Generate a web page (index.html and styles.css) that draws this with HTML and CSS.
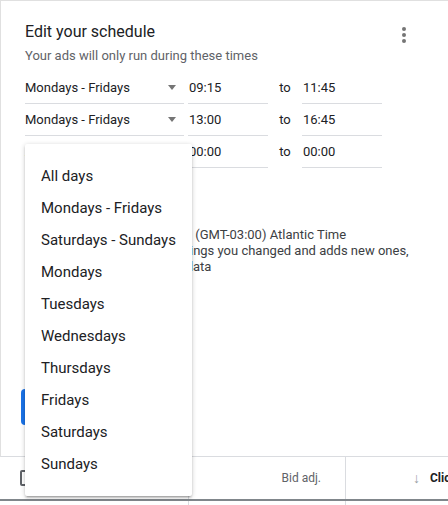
FILE: index.html
```html
<!DOCTYPE html>
<html lang="en">
<head>
    <meta charset="UTF-8">
    <meta name="viewport" content="width=device-width, initial-scale=1.0">
    <title>Ad schedule</title>
    <link rel="stylesheet" href="styles.css">
</head>
<body>
    <div class="page">
        <section class="card">
            <div class="card-head">
                <div>
                    <h2 class="title">Edit your schedule</h2>
                    <p class="subtitle">Your ads will only run during these times</p>
                </div>
                <button class="more" aria-label="More">
                    <svg width="24" height="24" viewBox="0 0 24 24"><circle cx="12" cy="6" r="2"/><circle cx="12" cy="12" r="2"/><circle cx="12" cy="18" r="2"/></svg>
                </button>
            </div>

            <div class="rows">
                <div class="row">
                    <div class="select"><span>Mondays - Fridays</span><span class="arrow"></span></div>
                    <div class="time">09:15</div>
                    <span class="to">to</span>
                    <div class="time">11:45</div>
                </div>
                <div class="row">
                    <div class="select"><span>Mondays - Fridays</span><span class="arrow"></span></div>
                    <div class="time">13:00</div>
                    <span class="to">to</span>
                    <div class="time">16:45</div>
                </div>
                <div class="row">
                    <div class="select"><span>All days</span><span class="arrow"></span></div>
                    <div class="time">00:00</div>
                    <span class="to">to</span>
                    <div class="time">00:00</div>
                </div>
            </div>

            <button class="add">+ Add</button>

            <div class="notes">
                <div>Based on account time zone: (GMT-03:00) Atlantic Time</div>
                <div>Saving only replaces the settings you changed and adds new ones, and won't change your past data</div>
            </div>

            <div class="actions">
                <button class="btn-primary">Save</button>
                <button class="btn-text">Cancel</button>
            </div>

            <ul class="menu">
                <li>All days</li>
                <li>Mondays - Fridays</li>
                <li>Saturdays - Sundays</li>
                <li>Mondays</li>
                <li>Tuesdays</li>
                <li>Wednesdays</li>
                <li>Thursdays</li>
                <li>Fridays</li>
                <li>Saturdays</li>
                <li>Sundays</li>
            </ul>
        </section>

        <div class="table-head">
            <div class="cell cell-check"><span class="checkbox"></span></div>
            <div class="cell cell-num">Bid adj.</div>
            <div class="cell cell-num cell-sort"><span class="sort">&#8595;</span> Clicks</div>
        </div>
        <div class="table-row">
            <div class="cell cell-check"></div>
            <div class="cell cell-num"></div>
            <div class="cell cell-num cell-sort"></div>
        </div>
    </div>
</body>
</html>
```

FILE: styles.css
```css
body {
    margin: 0;
    font-family: Roboto, "Liberation Sans", Arial, sans-serif;
    color: #202124;
    background-color: #fff;
    overflow: hidden;
}
.page {
    width: 620px;
}
.card {
    position: relative;
    border-top: 1px solid #e0e0e0;
    border-left: 1px solid #e0e0e0;
    border-bottom: 1px solid #dadce0;
    padding: 19px 24px 31px 24px;
}
.card-head {
    display: flex;
    justify-content: space-between;
    width: 391px;
}
.title {
    margin: 0;
    font-size: 16px;
    font-weight: 400;
    line-height: 24px;
}
.subtitle {
    margin: 2px 0 0;
    font-size: 13px;
    line-height: 20px;
    color: #5f6368;
}
.more {
    margin-top: 3px;
    padding: 0;
    border: none;
    background: none;
    width: 24px;
    height: 24px;
    fill: #757575;
}
.rows {
    margin-top: 6px;
}
.row {
    display: flex;
    height: 32px;
    font-size: 13px;
}
.select,
.time {
    display: flex;
    align-items: center;
    box-sizing: border-box;
    border-bottom: 1px solid #dadce0;
}
.select {
    width: 159px;
    justify-content: space-between;
    margin-right: 4px;
}
.arrow {
    margin-right: 8px;
    border-top: 5px solid #757575;
    border-left: 4px solid transparent;
    border-right: 4px solid transparent;
}
.time {
    width: 80px;
    padding-left: 1px;
}
.to {
    width: 34px;
    text-align: center;
    line-height: 31px;
}
.add {
    display: block;
    margin-top: 12px;
    height: 36px;
    padding: 0;
    border: none;
    background: none;
    font: 500 14px Roboto, sans-serif;
    color: #1a73e8;
}
.notes {
    margin-top: 11px;
    width: 391px;
    font-size: 13px;
    line-height: 16px;
    color: #3c4043;
}
.actions {
    display: flex;
    gap: 8px;
    margin-top: 114px;
    margin-left: -4px;
}
.btn-primary {
    height: 36px;
    padding: 0 24px;
    border: none;
    border-radius: 4px;
    background-color: #1a73e8;
    color: #fff;
    font: 500 14px Roboto, sans-serif;
}
.btn-text {
    height: 36px;
    padding: 0 16px;
    border: none;
    background: none;
    color: #1a73e8;
    font: 500 14px Roboto, sans-serif;
}
.menu {
    position: absolute;
    top: 143px;
    left: 24px;
    width: 167px;
    margin: 0;
    padding: 16px 0;
    list-style: none;
    background-color: #fff;
    border-radius: 2px;
    box-shadow: 0 2px 2px 0 rgba(0, 0, 0, 0.14), 0 3px 1px -2px rgba(0, 0, 0, 0.12), 0 1px 5px 0 rgba(0, 0, 0, 0.2);
}
.menu li {
    height: 32px;
    line-height: 32px;
    padding-left: 16px;
    font-size: 15px;
    color: #202124;
}
.table-head,
.table-row {
    display: flex;
}
.table-head {
    height: 42px;
    border-bottom: 2px solid #80868b;
}
.table-row {
    height: 40px;
}
.cell {
    display: flex;
    align-items: center;
    box-sizing: border-box;
    font-size: 12px;
    color: #5f6368;
}
.cell + .cell {
    border-left: 1px solid #dadce0;
}
.cell-check {
    width: 188px;
    padding-left: 20px;
}
.cell-num {
    width: 157px;
    justify-content: flex-end;
    padding-right: 24px;
}
.cell-sort {
    width: 142px;
    font-weight: 700;
    color: #202124;
}
.sort {
    margin-right: 10px;
    font-weight: 400;
    font-size: 14px;
    color: #9aa0a6;
}
.checkbox {
    width: 16px;
    height: 16px;
    box-sizing: border-box;
    border: 2px solid #5f6368;
    border-radius: 2px;
}
```
